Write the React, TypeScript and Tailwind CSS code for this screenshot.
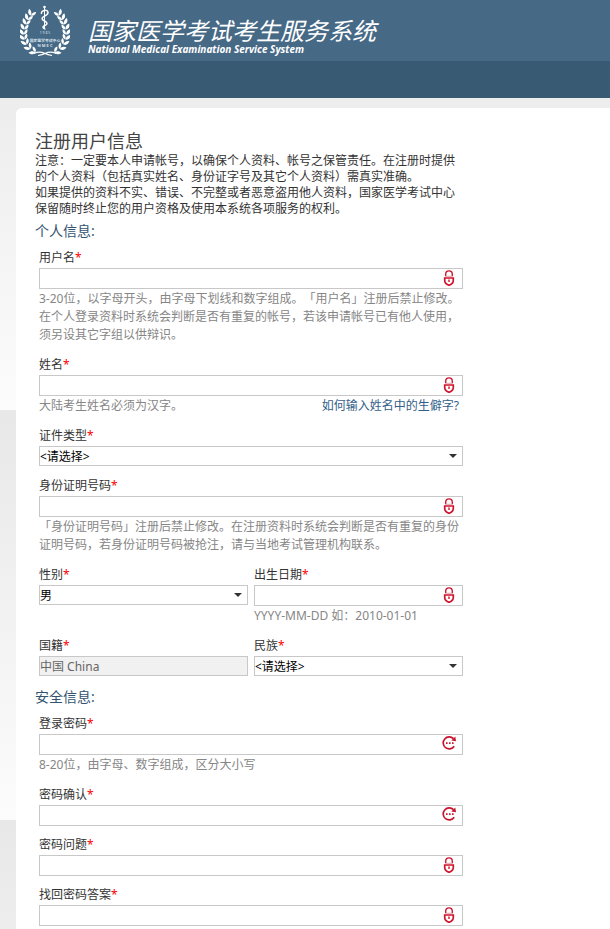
import { useId } from "react";
import type { ReactNode } from "react";

const LEAVES = [
  { x: 11, y: 10, r: 22 },
  { x: 8, y: 14.5, r: 18 },
  { x: 6, y: 19, r: 12 },
  { x: 4.5, y: 24, r: 4 },
  { x: 4, y: 29, r: -4 },
  { x: 4.5, y: 34, r: -14 },
  { x: 6.5, y: 39, r: -26 },
  { x: 10, y: 43.5, r: -42 },
  { x: 15, y: 47, r: -60 },
];

function Branch() {
  return (
    <g fill="#fff">
      {LEAVES.map((l) => (
        <g key={l.y} transform={`translate(${l.x} ${l.y}) rotate(${l.r})`}>
          <path d="M0 .6C-3.400 .2-4.600-2.200-4-5.200C-1.400-4.400.2-2.200 0 .6Z" />
          <path d="M0 .6C3 0 4.200-2 3.600-4.800C1.200-4 0-2 0 .6Z" />
        </g>
      ))}
    </g>
  );
}

function Emblem() {
  return (
    <svg width="50" height="52" viewBox="0 0 50 52" role="img" aria-label="NMEC" className="shrink-0">
      <Branch />
      <g transform="translate(50 0) scale(-1 1)">
        <Branch />
      </g>
      <path d="M14 48.500c4-2 8-1.500 11 0 3-1.500 7-2 11 0M18 50.500c3-.5 5-1 7-2 2 1 4 1.500 7 2" fill="none" stroke="#fff" strokeWidth="1.200" />
      {/* staff and snake */}
      <path d="M24.500 1v22" stroke="#fff" strokeWidth="1" />
      <circle cx="24.500" cy="2" r="1.300" fill="#fff" />
      <path d="M21.500 9c-1-4 6.500-5 6.500-1.500s-6 3.500-6 6 5 2.500 5 5-4 1.500-4 3.500 2 1 2 2.500" fill="none" stroke="#fff" strokeWidth="1.500" />
      <g fill="#d5e2ec" textAnchor="middle" fontFamily="'Noto Sans', 'Noto Sans CJK SC', sans-serif">
        <text x="25" y="29" fontSize="3.500" xmlSpace="preserve">1 9 8 5</text>
        <text x="25" y="36.500" fontSize="3.800" fontWeight="700">国家医学考试中心</text>
        <text x="25" y="41.500" fontSize="4" fontWeight="700">N M E C</text>
      </g>
    </svg>
  );
}

function LockIcon() {
  return (
    <svg width="12" height="16" viewBox="0 0 12 16" fill="none">
      <path d="M2.700 6V4.200a3.300 3.300 0 0 1 6.600 0V6" stroke="#d0142c" strokeWidth="1.400" />
      <path d="M2 6.300h8" stroke="#d98a94" strokeWidth="0.800" />
      <path d="M1.700 8h8.600v2.300c0 2.600-1.800 4.200-4.300 5-2.500-.8-4.300-2.400-4.300-5Z" stroke="#d0142c" strokeWidth="1.700" />
      <rect x="5" y="9.500" width="2" height="2.500" fill="#e0596b" />
    </svg>
  );
}

function PasswordIcon() {
  return (
    <svg width="15" height="14" viewBox="0 0 15 14" fill="none">
      <path d="M12.200 10.300A6 6 0 1 1 11.500 2.700" stroke="#c8142c" strokeWidth="1.700" />
      <path d="M13.300.5 14 5.200 9.300 4.600Z" fill="#c8142c" />
      <path d="M4 6.300h1.600v1.600H4zM7 6.300h1.600v1.600H7zM10 6.300h1.600v1.600H10z" fill="#c8142c" />
    </svg>
  );
}

type FieldProps = {
  label: string;
  hint?: ReactNode;
  children: (id: string) => ReactNode;
};

function Field({ label, hint, children }: FieldProps) {
  const id = useId();
  return (
    <div className="mb-[9px] min-w-0">
      <label htmlFor={id} className="block leading-5 text-[#333]">
        {label}
        <span className="text-[#f00]">*</span>
      </label>
      <div className="relative flex h-[21px] items-start">{children(id)}</div>
      {hint && <div className="pt-px pb-0.5 leading-[18px] text-[#868686]">{hint}</div>}
    </div>
  );
}

type TextFieldProps = {
  label: string;
  type?: string;
  hint?: ReactNode;
};

function TextField({ label, type = "text", hint }: TextFieldProps) {
  return (
    <Field label={label} hint={hint}>
      {(id) => (
        <>
          <input id={id} type={type} className="h-full w-full border border-[#c8c8c8] bg-white pr-8 pl-px outline-none" />
          <span className="pointer-events-none absolute inset-y-0 right-1.5 flex w-4 items-start justify-center pt-0.5">
            {type === "password" ? <PasswordIcon /> : <LockIcon />}
          </span>
        </>
      )}
    </Field>
  );
}

function SelectField({ label, options }: { label: string; options: string[] }) {
  return (
    <Field label={label}>
      {(id) => (
        <>
          <select id={id} className="h-5 w-full appearance-none border border-[#c8c8c8] bg-white pt-px text-black outline-none">
            {options.map((o) => (
              <option key={o}>{o}</option>
            ))}
          </select>
          <svg width="8" height="4" viewBox="0 0 8 4" className="pointer-events-none absolute top-2 right-1.5">
            <path d="M0 0h8L4 4Z" fill="#333" />
          </svg>
        </>
      )}
    </Field>
  );
}

function SectionTitle({ children }: { children: ReactNode }) {
  return <h2 className="mb-[7px] pt-px text-[14px] leading-5 text-[#33536f]">{children}</h2>;
}

export default function App() {
  return (
    <div className="flex min-h-screen flex-col bg-[repeating-linear-gradient(#e8e8e8_0px,#fcfcfc_410px)] font-['Noto_Sans','Noto_Sans_CJK_SC',sans-serif] text-[12px] [text-spacing-trim:space-all]">
      <header>
        <div className="flex h-[61px] items-center gap-[18px] bg-[#466986] pl-5">
          <Emblem />
          <div className="pt-3 text-white italic">
            <p className="text-[24px] leading-6">国家医学考试考生服务系统</p>
            <p className="text-[10px] leading-3 font-bold">National Medical Examination Service System</p>
          </div>
        </div>
        <nav className="h-[37px] bg-[#395a73]" />
      </header>

      <main className="mt-2.5 ml-4 flex-1 rounded-tl-md bg-white pt-[21px] pl-[19px]">
        <div className="max-w-[428px]">
          <h1 className="text-[18px] leading-6 text-[#444]">注册用户信息</h1>
          <div className="mb-[3px] pr-1 leading-4 text-[#333]">
            <p>注意：一定要本人申请帐号，以确保个人资料、帐号之保管责任。在注册时提供的个人资料（包括真实姓名、身份证字号及其它个人资料）需真实准确。</p>
            <p>如果提供的资料不实、错误、不完整或者恶意盗用他人资料，国家医学考试中心保留随时终止您的用户资格及使用本系统各项服务的权利。</p>
          </div>

          <form>
            <SectionTitle>个人信息:</SectionTitle>
            <div className="pl-1">
              <TextField
                label="用户名"
                hint={
                  <>
                    <p>3-20位，以字母开头，由字母下划线和数字组成。「用户名」注册后禁止修改。</p>
                    <p>在个人登录资料时系统会判断是否有重复的帐号，若该申请帐号已有他人使用，须另设其它字组以供辩识。</p>
                  </>
                }
              />
              <TextField
                label="姓名"
                hint={
                  <div className="flex justify-between pr-1">
                    <span>大陆考生姓名必须为汉字。</span>
                    <a href="#" className="text-[#336088]">如何输入姓名中的生僻字?</a>
                  </div>
                }
              />
              <SelectField label="证件类型" options={["<请选择>"]} />
              <TextField
                label="身份证明号码"
                hint="「身份证明号码」注册后禁止修改。在注册资料时系统会判断是否有重复的身份证明号码，若身份证明号码被抢注，请与当地考试管理机构联系。"
              />
              <div className="grid grid-cols-2 gap-x-1.5">
                <SelectField label="性别" options={["男", "女"]} />
                <TextField label="出生日期" hint="YYYY-MM-DD 如：2010-01-01" />
                <Field label="国籍">
                  {(id) => (
                    <input id={id} disabled value="中国 China" className="h-5 w-full border border-[#c8c8c8] bg-[#f1f1f1] text-[#666]" />
                  )}
                </Field>
                <SelectField label="民族" options={["<请选择>"]} />
              </div>
            </div>

            <SectionTitle>安全信息:</SectionTitle>
            <div className="pl-1">
              <TextField label="登录密码" type="password" hint="8-20位，由字母、数字组成，区分大小写" />
              <TextField label="密码确认" type="password" />
              <TextField label="密码问题" />
              <TextField label="找回密码答案" />
            </div>
          </form>
        </div>
      </main>
    </div>
  );
}
